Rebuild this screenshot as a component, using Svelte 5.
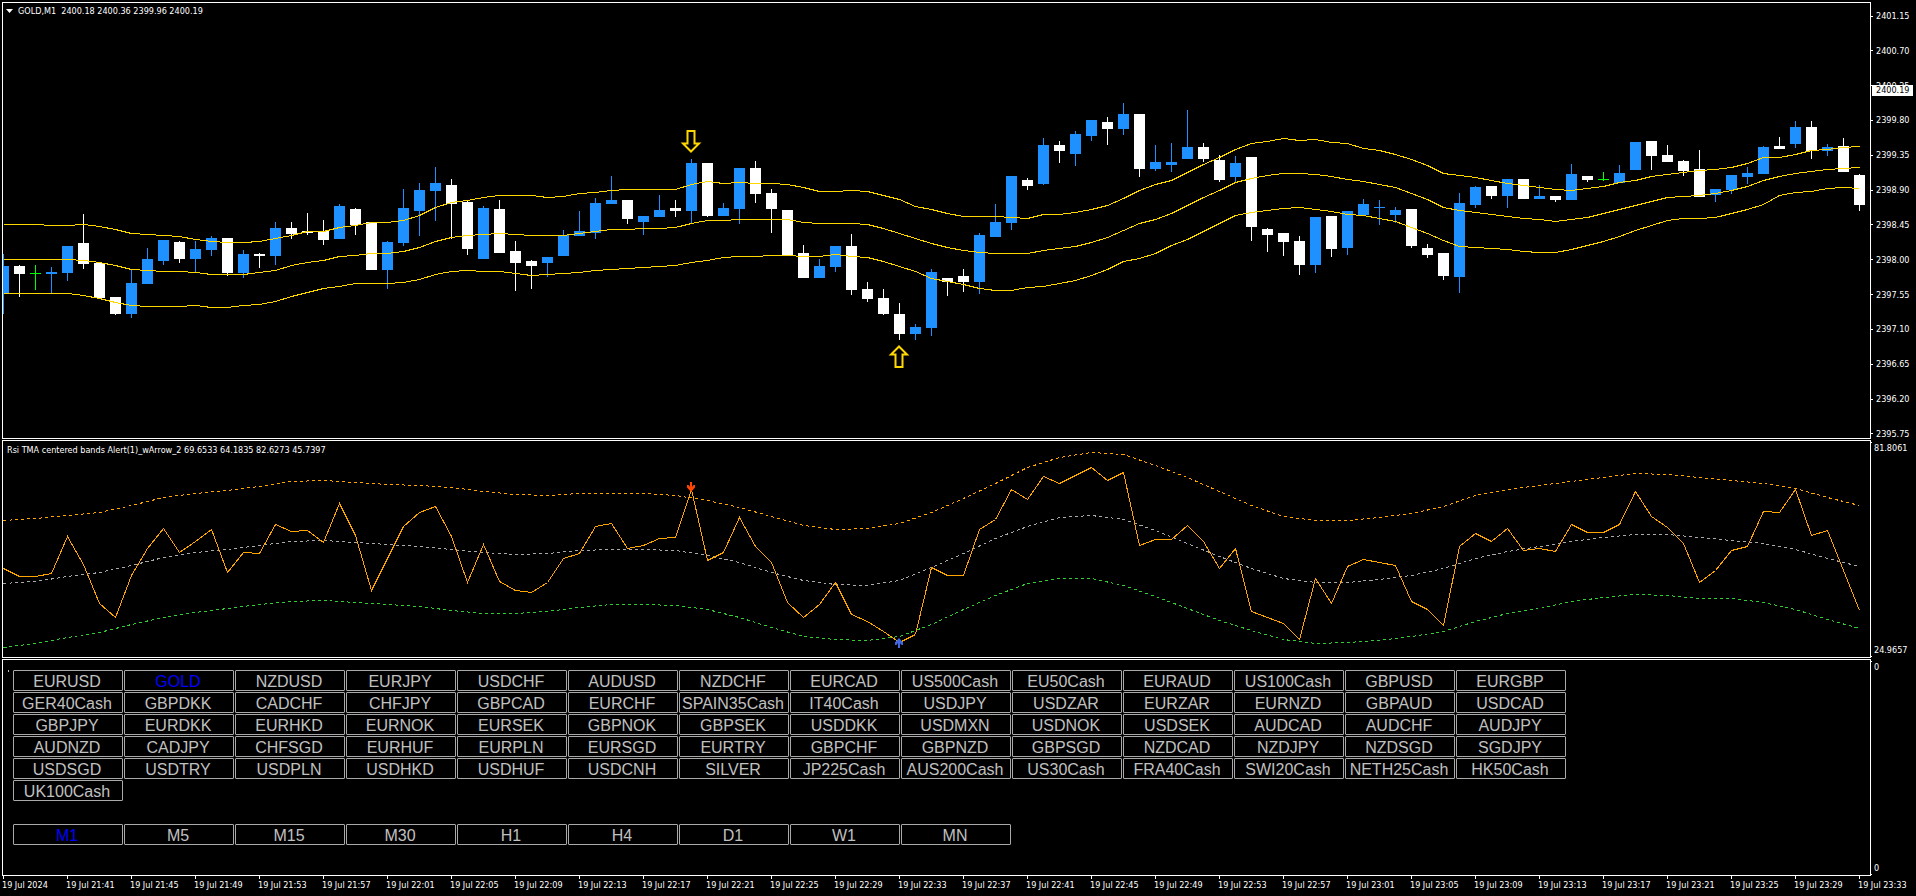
<script>
  const STEP = 16;
  const FIRST = 3;

  let symbol = $state("GOLD");
  let period = $state("M1");

  const symbols = `EURUSD GOLD NZDUSD EURJPY USDCHF AUDUSD NZDCHF EURCAD US500Cash EU50Cash EURAUD US100Cash GBPUSD EURGBP
    GER40Cash GBPDKK CADCHF CHFJPY GBPCAD EURCHF SPAIN35Cash IT40Cash USDJPY USDZAR EURZAR EURNZD GBPAUD USDCAD
    GBPJPY EURDKK EURHKD EURNOK EURSEK GBPNOK GBPSEK USDDKK USDMXN USDNOK USDSEK AUDCAD AUDCHF AUDJPY
    AUDNZD CADJPY CHFSGD EURHUF EURPLN EURSGD EURTRY GBPCHF GBPNZD GBPSGD NZDCAD NZDJPY NZDSGD SGDJPY
    USDSGD USDTRY USDPLN USDHKD USDHUF USDCNH SILVER JP225Cash AUS200Cash US30Cash FRA40Cash SWI20Cash NETH25Cash HK50Cash
    UK100Cash`.split(/\s+/);

  const periods = ["M1", "M5", "M15", "M30", "H1", "H4", "D1", "W1", "MN"];

  const prices = [];
  for (let i = 0; i < 13; i++) prices.push((2401.15 - i * 0.45).toFixed(2));

  const times = ["19 Jul 2024"];
  for (let i = 0; i < 29; i++) {
    const m = 21 * 60 + 41 + i * 4;
    times.push("19 Jul " + Math.floor(m / 60) + ":" + String(m % 60).padStart(2, "0"));
  }

  // kind, high, body top, body bottom, low
  const candles = `
    b 254 266 293 314,w 265 266 274 297,g 265 273 274 290,b 267 272 274 293,b 246 246 273 281,w 214 243 264 269,
    w 263 263 298 298,w 297 297 314 315,b 269 283 314 318,b 248 259 284 284,b 240 240 261 265,w 241 242 259 263,
    b 241 249 259 273,b 236 238 250 256,w 238 238 273 276,b 250 254 273 278,w 253 254 256 268,b 222 228 256 265,
    w 222 228 234 239,w 213 231 233 235,w 220 231 240 245,b 204 206 239 239,w 208 209 225 235,w 222 222 270 270,
    b 241 242 270 289,b 189 208 243 246,b 183 190 211 236,b 167 183 191 221,w 179 185 204 239,w 200 202 249 255,
    b 206 208 259 259,w 200 209 253 253,w 241 251 263 291,w 260 261 266 289,b 257 257 263 277,b 230 235 256 256,
    b 211 231 236 236,b 198 203 233 239,b 176 200 204 204,w 200 200 219 224,b 216 216 222 235,b 195 210 217 217,
    w 200 208 211 217,b 159 163 211 224,w 163 163 216 217,b 203 208 216 216,b 168 168 209 224,w 161 168 194 203,
    w 189 193 209 233,w 210 210 255 255,w 245 253 278 278,b 259 266 278 278,b 246 246 267 272,w 234 246 290 295,
    w 282 289 299 302,w 289 298 314 315,w 303 314 334 340,b 324 327 334 340,b 269 272 328 336,w 278 278 282 296,
    w 269 276 282 292,b 233 235 282 294,b 204 222 237 237,b 176 176 223 230,w 178 180 186 190,b 138 145 184 185,
    w 141 145 151 163,b 131 134 154 166,b 120 120 136 141,w 117 122 129 145,b 103 114 129 135,w 114 114 169 177,
    b 145 162 169 171,b 143 162 165 172,b 110 147 159 159,w 143 147 159 162,w 155 160 180 182,b 156 163 177 182,
    w 157 157 227 241,w 228 229 235 252,w 233 233 242 256,w 236 241 265 275,b 217 217 265 273,w 216 216 249 257,
    b 211 211 248 255,b 199 204 215 215,b 200 207 208 225,b 207 210 215 223,w 209 209 246 248,w 244 248 255 258,
    w 253 253 276 280,b 193 203 277 293,b 186 187 205 208,w 186 186 196 199,b 179 179 196 208,w 179 179 199 199,
    b 185 196 199 199,w 196 196 200 202,b 164 174 200 200,w 176 176 180 182,g 172 179 180 181,b 165 173 183 183,
    b 142 142 170 170,w 141 141 156 170,w 145 155 162 162,w 160 161 171 176,w 150 169 197 197,b 189 189 195 202,
    b 175 175 190 194,b 167 173 177 184,b 146 147 174 174,w 137 146 149 149,b 121 127 144 148,w 121 127 151 159,
    b 144 147 151 156,w 138 146 172 172,w 174 175 205 211`
    .split(",")
    .map((row, i) => {
      const [kind, high, top, bottom, low] = row.trim().split(" ");
      return { kind, x: FIRST + i * STEP, high: +high, top: +top, bottom: +bottom, low: +low };
    });

  function line(values, every = 1) {
    return values
      .trim()
      .split(/\s+/)
      .map((y, i) => FIRST + i * STEP * every + 0.5 + "," + (+y + 0.5))
      .join(" ");
  }

  const bands = [
    line(`224 224 224 225 225 224 226 229 233 234 235 236 239 241 242 242 241 238 235 231 231 227 225 222 222
      220 215 207 202 200 197 195 195 195 197 196 193 192 190 189 189 189 189 184 181 183 182 183 183
      184 187 191 191 190 191 195 199 206 209 213 216 216 216 217 218 214 214 212 209 205 198 190 184
      180 172 164 157 149 143 141 138 140 139 142 143 148 150 154 159 165 173 175 177 180 183 185 187
      189 190 188 186 182 180 176 174 172 170 169 167 163 157 157 154 150 149 147 146`),
    line(`259 259 259 259 259 260 262 265 269 270 271 271 272 274 274 274 272 270 265 262 260 256 255 253 253
      251 247 241 237 235 234 233 234 235 235 235 233 231 229 229 228 228 227 223 220 220 219 219 219
      219 222 223 223 223 224 228 233 238 243 247 250 252 253 253 253 250 248 246 242 237 230 223 219
      213 205 197 190 182 178 175 173 173 174 176 179 181 184 187 193 199 207 210 212 214 216 218 219
      221 219 217 213 209 205 201 197 196 195 193 190 186 180 176 173 171 169 168 167`),
    line(`293 293 293 293 293 295 298 302 305 306 306 306 305 307 307 305 304 301 296 292 288 286 283 283 283
      282 279 274 271 270 271 271 273 275 274 273 272 270 269 268 267 266 265 262 260 257 256 256 255
      255 256 256 254 256 257 261 266 271 278 281 284 288 290 290 287 286 283 280 275 269 261 258 253
      245 239 231 223 215 212 210 208 207 209 211 214 215 218 221 227 233 240 246 247 248 249 251 252
      252 249 245 241 236 230 225 220 218 218 217 213 209 204 195 192 191 188 187 188`)
  ];

  const rsi = line(`568 576 576 573 536 564 603 617 575 548 528 552 541 529 572 552 553 524 531 530 542 503 535 590
    558 526 512 506 536 582 544 581 590 592 582 558 553 526 523 548 545 538 537 489 560 552 517 546 562
    602 617 604 582 614 621 631 642 634 567 575 575 529 519 489 499 476 483 475 467 480 472 545 539 539
    525 541 568 548 611 617 623 639 578 603 566 559 562 565 601 609 625 546 533 541 528 550 548 551 524
    532 532 524 491 516 527 543 582 570 550 546 511 512 489 535 530 570 610`);

  const rsiUpper = line(`520 518 515 512 505 497 493 490 486 481 480 482 484 485 487 491 494 495 493 493 493 495
    500 507 516 525 529 528 523 512 498 483 467 457 452 454 465 477 491 505 516 520 520 517 513 506 495
    489 485 481 477 473 474 477 480 483 488 497 505`, 2);
  const rsiMiddle = line(`583 581 576 572 565 557 552 549 545 541 540 542 544 546 549 552 554 553 550 549 549 550
    555 562 572 580 584 585 580 567 553 538 526 517 515 519 530 543 556 568 578 582 582 579 575 568 558
    551 546 541 537 534 534 537 540 543 549 558 566`, 2);
  const rsiLower = line(`647 643 637 632 624 617 612 608 604 601 600 602 604 606 610 613 613 611 607 604 604 605
    609 617 627 636 639 640 636 624 609 595 583 578 578 585 596 608 620 630 639 643 642 640 636 631 621
    613 608 601 597 594 595 598 598 602 609 619 628`, 2);
</script>

<main class="terminal">
  <div class="windows">
    <section class="panel">
      <h1 class="title">
        <svg class="caret" viewBox="0 0 7 4" aria-hidden="true"><path d="M0 0H7L3.5 4Z" /></svg>
        <span>GOLD,M1&nbsp; 2400.18 2400.36 2399.96 2400.19</span>
      </h1>
      <svg class="plot" viewBox="3 3 1867 435" preserveAspectRatio="none">
        {#each candles as c}
          <g class={c.kind}>
            <rect x={c.x} y={c.high} width="1" height={c.low - c.high} />
            <rect x={c.x - 5} y={c.top} width="11" height={c.bottom - c.top} />
          </g>
        {/each}
        {#each bands as points}
          <polyline class="band" {points} />
        {/each}
        <path class="signal" d="M687.5 131H694.5V143.5H699L691 151.5L683 143.5H687.5Z" />
        <path class="signal" d="M899 346.5L907 354.5H902.5V367H895.5V354.5H891Z" />
      </svg>
    </section>
    <div class="axis price-axis">
      {#each prices as price}
        <span class="mark">{price}</span>
      {/each}
      <span class="current">2400.19</span>
    </div>

    <section class="panel">
      <h2 class="title indicator">
        Rsi TMA centered bands Alert(1)_wArrow_2 69.6533 64.1835 82.6273 45.7397
      </h2>
      <svg class="plot" viewBox="3 441 1867 216" preserveAspectRatio="none">
        <polyline class="dotted upper" points={rsiUpper} />
        <polyline class="dotted middle" points={rsiMiddle} />
        <polyline class="dotted lower" points={rsiLower} />
        <polyline class="rsi" points={rsi} />
        <path class="sell" d="M690 482H692V487L693.5 485H695V487.5L691 492L687 487.5V485H688.5L690 487Z" />
        <path class="buy" d="M898 648H900V643L901.5 645H903V642.5L899 638L895 642.5V645H896.5L898 643Z" />
      </svg>
    </section>
    <div class="axis range-axis">
      <span>81.8061</span>
      <span>24.9657</span>
    </div>

    <section class="panel switcher">
      <div class="grid">
        {#each symbols as name}
          <button class:active={name === symbol} onclick={() => (symbol = name)}>{name}</button>
        {/each}
      </div>
      <div class="grid">
        {#each periods as name}
          <button class:active={name === period} onclick={() => (period = name)}>{name}</button>
        {/each}
      </div>
    </section>
    <div class="axis range-axis">
      <span>0</span>
      <span>0</span>
    </div>
  </div>

  <div class="times">
    {#each times as time}
      <span>{time}</span>
    {/each}
  </div>
</main>

<style>
  :global(body) {
    background: #000;
  }

  .terminal {
    display: flex;
    flex-direction: column;
    box-sizing: border-box;
    height: 100vh;
    padding: 2px 0 0 2px;
    overflow: hidden;
    background: #000;
    color: #fff;
    font: 9px/12px "DejaVu Sans Condensed", "DejaVu Sans", sans-serif;
  }

  .windows {
    flex: 1;
    min-height: 0;
    display: grid;
    grid-template-columns: 1fr 45px;
    grid-template-rows: 437fr 218fr 217fr;
    row-gap: 1px;
  }

  .panel {
    position: relative;
    min-width: 0;
    min-height: 0;
    border: 1px solid #fff;
  }

  .plot {
    display: block;
    width: 100%;
    height: 100%;
    shape-rendering: crispEdges;
  }

  .title {
    position: absolute;
    top: 2px;
    left: 3px;
    display: flex;
    align-items: center;
    gap: 5px;
    margin: 0;
    font-size: 9px;
    font-weight: normal;
    white-space: nowrap;
  }

  .indicator {
    top: 3px;
    left: 4px;
  }

  .caret {
    width: 7px;
    height: 4px;
    fill: #fff;
  }

  .b {
    fill: #1e90ff;
  }

  .w {
    fill: #fff;
  }

  .g {
    fill: #0f0;
  }

  polyline,
  .signal {
    fill: none;
    stroke-width: 1;
  }

  .band {
    stroke: #ffd700;
  }

  .signal {
    stroke: #ffd700;
    stroke-width: 2;
    shape-rendering: geometricPrecision;
  }

  .dotted {
    stroke-dasharray: 3 3;
  }

  .upper,
  .rsi {
    stroke: #ffa500;
  }

  .middle {
    stroke: #a9a9a9;
  }

  .lower {
    stroke: #32cd32;
  }

  .sell {
    fill: #ff4500;
  }

  .buy {
    fill: #4169e1;
  }

  .sell,
  .buy {
    shape-rendering: geometricPrecision;
  }

  .axis {
    position: relative;
    display: flex;
    flex-direction: column;
    justify-content: space-between;
  }

  .price-axis {
    margin: 8px 0 -1px;
  }

  .mark {
    display: flex;
    align-items: center;
    gap: 3px;
  }

  .mark::before {
    content: "";
    width: 2px;
    height: 1px;
    background: #fff;
  }

  .current {
    position: absolute;
    top: 75px;
    left: 1px;
    width: 37px;
    padding-left: 4px;
    background: #fff;
    color: #000;
    line-height: 11px;
  }

  .range-axis {
    padding: 2px 0 2px 3px;
  }

  .range-axis::before,
  .range-axis::after {
    content: "";
    position: absolute;
    left: 0;
    top: 2px;
    width: 1px;
    height: 1px;
    background: #fff;
  }

  .range-axis::after {
    top: auto;
    bottom: 1px;
  }

  .switcher {
    display: flex;
    flex-direction: column;
    gap: 23px;
    padding: 10px;
  }

  .switcher::before {
    content: "";
    position: absolute;
    top: 10px;
    left: 5px;
    width: 1px;
    height: 2px;
    background: #c0c0c0;
  }

  .grid {
    display: grid;
    grid-template-columns: repeat(14, 110px);
    gap: 1px;
  }

  button {
    height: 21px;
    padding: 2px 2px 0 0;
    border: 1px solid #a9a9a9;
    border-radius: 1px;
    background: #000;
    color: #c0c0c0;
    font: 16px/18px "Liberation Sans", Arial, sans-serif;
    white-space: nowrap;
    cursor: pointer;
  }

  .active {
    color: #00f;
  }

  .times {
    display: grid;
    grid-template-columns: repeat(29, 1fr) 58px;
    height: 20px;
  }

  .times span {
    position: relative;
    padding-top: 3px;
    white-space: nowrap;
  }

  .times span::before {
    content: "";
    position: absolute;
    top: 0;
    left: 1px;
    width: 1px;
    height: 3px;
    background: #fff;
  }
</style>
